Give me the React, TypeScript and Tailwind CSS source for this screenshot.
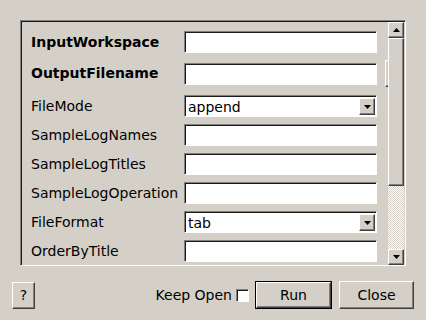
import React from "react";

const font = { fontFamily: '"DejaVu Sans", Verdana, sans-serif' };

function Sunken({ children }: { children?: React.ReactNode }) {
  return (
    <div className="w-[193px] h-[22px] shrink-0 border-t border-l border-r border-b border-t-[#808080] border-l-[#808080] border-r-white border-b-white">
      <div className="w-full h-full border-t border-l border-t-[#1a1a1a] border-l-[#1a1a1a] bg-white flex items-center">
        {children}
      </div>
    </div>
  );
}

function Arrow({ down }: { down?: boolean }) {
  return (
    <svg width="7" height="4" viewBox="0 0 7 4">
      <polygon points={down ? "0,0 7,0 3.5,4" : "0,4 7,4 3.5,0"} fill="#000" />
    </svg>
  );
}

function RaisedBox({ className, children }: { className?: string; children?: React.ReactNode }) {
  return (
    <div
      className={
        "border-t border-l border-r border-b border-t-white border-l-white border-r-[#404040] border-b-[#404040] shadow-[inset_-1px_-1px_0_#808080] bg-[#d4d0c8] flex items-center justify-center " +
        (className ?? "")
      }
    >
      {children}
    </div>
  );
}

function Combo({ value }: { value: string }) {
  return (
    <Sunken>
      <span className="pl-[2px] flex-1 text-[14px] text-black leading-none">{value}</span>
      <RaisedBox className="w-[16px] h-[17px] mr-px">
        <Arrow down />
      </RaisedBox>
    </Sunken>
  );
}

const rows = [
  { label: "InputWorkspace", bold: true },
  { label: "OutputFilename", bold: true, browse: true },
  { label: "FileMode", combo: "append" },
  { label: "SampleLogNames" },
  { label: "SampleLogTitles" },
  { label: "SampleLogOperation" },
  { label: "FileFormat", combo: "tab" },
  { label: "OrderByTitle" },
];

export default function App() {
  return (
    <div className="w-[426px] h-[320px] bg-[#d4d0c8] overflow-hidden text-black" style={font}>
      <div className="pt-[20px] pl-[20px]">
        <div className="w-[386px] h-[246px] border-t border-l border-r border-b border-t-[#808080] border-l-[#808080] border-r-white border-b-white">
          <div className="w-full h-full border-t border-l border-t-[#1a1a1a] border-l-[#1a1a1a] flex">
            {/* content */}
            <div className="w-[366px] h-full overflow-hidden">
              <div className="pt-[9px] pl-[9px] flex flex-col gap-[7px]">
                {rows.map((r, i) => (
                  <div
                    key={r.label}
                    className={"flex items-center shrink-0 " + (r.browse ? "h-[27px]" : "h-[22px]") + (i === 2 ? " mt-px" : "")}
                  >
                    <div className={"w-[153px] shrink-0 text-[14px] " + (r.bold ? "font-bold" : "")}>{r.label}</div>
                    {r.combo ? <Combo value={r.combo} /> : <Sunken />}
                    {r.browse && <RaisedBox className="ml-[8px] w-[60px] h-[27px] shrink-0" />}
                  </div>
                ))}
              </div>
            </div>
            {/* scrollbar */}
            <div className="w-[16px] h-full flex flex-col">
              <RaisedBox className="h-[16px] shrink-0">
                <Arrow />
              </RaisedBox>
              <RaisedBox className="h-[148px] shrink-0" />
              <div className="flex-1 bg-[repeating-conic-gradient(#ffffff_0_25%,#d4d0c8_0_50%)] bg-[length:2px_2px]" />
              <RaisedBox className="h-[16px] shrink-0">
                <Arrow down />
              </RaisedBox>
            </div>
          </div>
        </div>
      </div>

      <div className="mt-[15px] flex items-center h-[28px] px-[12px] text-[14px]">
        <RaisedBox className="w-[23px] h-[27px]">?</RaisedBox>
        <div className="flex-1" />
        <span className="mr-[4px]">Keep Open</span>
        <div className="w-[13px] h-[13px] border-t border-l border-r border-b border-t-[#808080] border-l-[#808080] border-r-white border-b-white">
          <div className="w-full h-full border-t border-l border-t-[#1a1a1a] border-l-[#1a1a1a] bg-white" />
        </div>
        <div className="ml-[6px] border border-black">
          <RaisedBox className="w-[75px] h-[26px]">Run</RaisedBox>
        </div>
        <RaisedBox className="ml-[7px] w-[75px] h-[28px]">Close</RaisedBox>
      </div>
    </div>
  );
}
